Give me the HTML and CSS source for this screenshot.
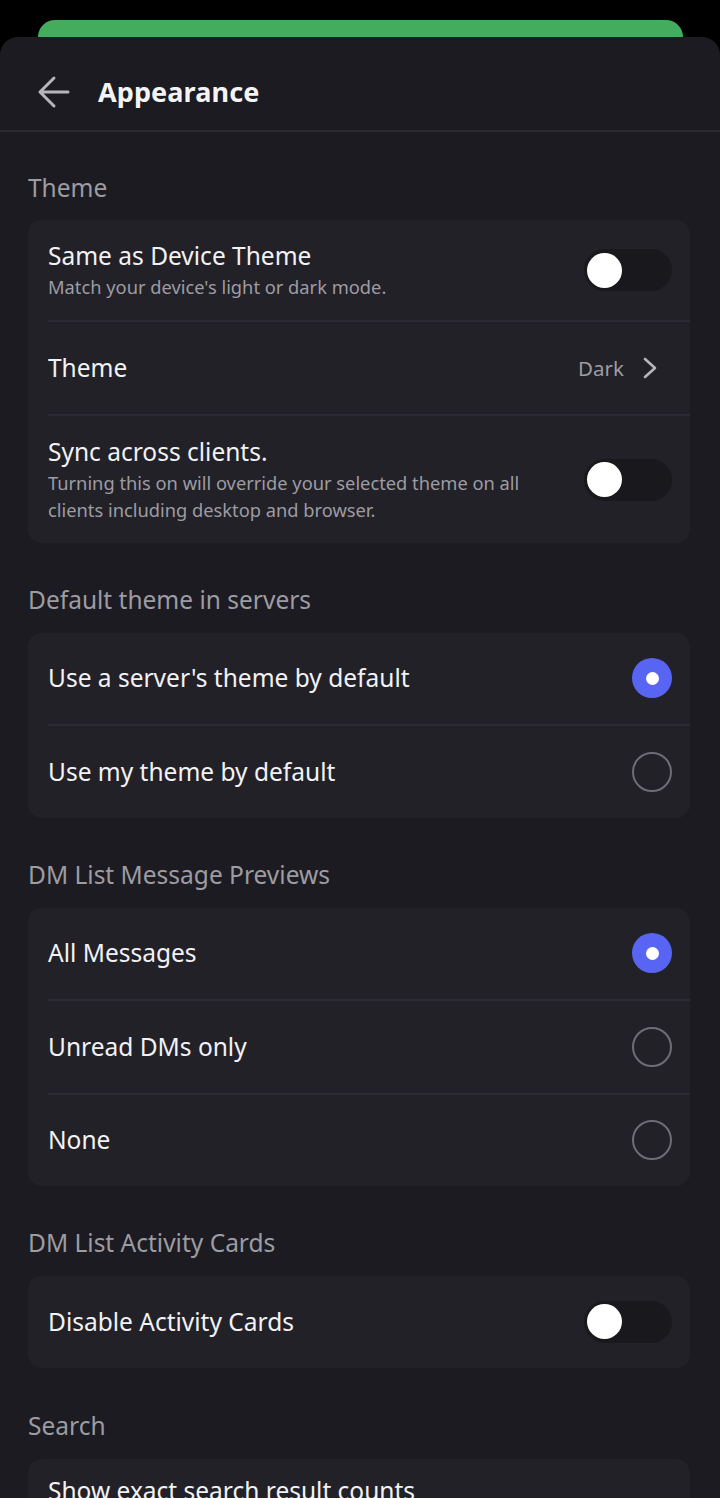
FILE: index.html
```html
<!DOCTYPE html>
<html lang="en">
<head>
<meta charset="utf-8">
<title>Appearance</title>
<link rel="stylesheet" href="styles.css">
</head>
<body>
<div class="screen">
  <div class="behind"><div class="green-bar"></div></div>
  <div class="sheet">
    <header class="topbar">
      <svg class="back" width="34" height="34" viewBox="0 0 34 34" aria-hidden="true">
        <path d="M31 17H3M17 3L3 17l14 14" fill="none" stroke="#b5b5bb" stroke-width="3" stroke-linecap="round" stroke-linejoin="round"/>
      </svg>
      <h1 class="title">Appearance</h1>
    </header>

    <main class="content">
      <section class="section">
        <h2 class="label">Theme</h2>
        <div class="card">
          <div class="row row-sub">
            <div class="text">
              <div class="row-title">Same as Device Theme</div>
              <div class="row-desc">Match your device's light or dark mode.</div>
            </div>
            <span class="toggle"><span class="knob"></span></span>
          </div>
          <div class="divider"></div>
          <div class="row">
            <div class="row-title">Theme</div>
            <div class="value">Dark
              <svg class="chev" width="16" height="22" viewBox="0 0 16 22" aria-hidden="true"><path d="M3 2l10 9-10 9" fill="none" stroke="#b5b5bb" stroke-width="2.6" stroke-linecap="round" stroke-linejoin="round"/></svg>
            </div>
          </div>
          <div class="divider"></div>
          <div class="row row-sub row-sync">
            <div class="text">
              <div class="row-title">Sync across clients.</div>
              <div class="row-desc">Turning this on will override your selected theme on all clients including desktop and browser.</div>
            </div>
            <span class="toggle"><span class="knob"></span></span>
          </div>
        </div>
      </section>

      <section class="section">
        <h2 class="label">Default theme in servers</h2>
        <div class="card">
          <div class="row">
            <div class="row-title">Use a server's theme by default</div>
            <span class="radio checked"></span>
          </div>
          <div class="divider"></div>
          <div class="row">
            <div class="row-title">Use my theme by default</div>
            <span class="radio"></span>
          </div>
        </div>
      </section>

      <section class="section">
        <h2 class="label">DM List Message Previews</h2>
        <div class="card">
          <div class="row">
            <div class="row-title">All Messages</div>
            <span class="radio checked"></span>
          </div>
          <div class="divider"></div>
          <div class="row">
            <div class="row-title">Unread DMs only</div>
            <span class="radio"></span>
          </div>
          <div class="divider"></div>
          <div class="row">
            <div class="row-title">None</div>
            <span class="radio"></span>
          </div>
        </div>
      </section>

      <section class="section">
        <h2 class="label">DM List Activity Cards</h2>
        <div class="card">
          <div class="row">
            <div class="row-title">Disable Activity Cards</div>
            <span class="toggle"><span class="knob"></span></span>
          </div>
        </div>
      </section>

      <section class="section section-search">
        <h2 class="label">Search</h2>
        <div class="card">
          <div class="row row-last">
            <div class="row-title">Show exact search result counts</div>
          </div>
        </div>
      </section>
    </main>
  </div>
</div>
</body>
</html>
```

FILE: styles.css
```css
* { box-sizing: border-box; }

html, body {
  margin: 0;
  padding: 0;
  background: #000;
}

body {
  font-family: "Noto Sans", "Open Sans", sans-serif;
  color: #f2f2f5;
  width: 720px;
  height: 1498px;
  overflow: hidden;
}

.screen {
  display: flex;
  flex-direction: column;
  height: 1498px;
}

.behind {
  height: 37px;
  padding: 20px 37px 0 38px;
  flex: none;
}

.green-bar {
  height: 17px;
  background: #43ad5d;
  border-radius: 26px 26px 0 0;
}

.sheet {
  flex: 1;
  background: #1c1b21;
  border-radius: 18px 18px 0 0;
  overflow: hidden;
}

.topbar {
  height: 95px;
  display: flex;
  align-items: center;
  padding: 16px 0 0 37px;
  gap: 27px;
  border-bottom: 2px solid #2b2a31;
}

.back { flex: none; }

.title {
  margin: 0;
  font-size: 27px;
  font-weight: 700;
  color: #f4f4f6;
  letter-spacing: 0.1px;
}

.content {
  padding: 0 30px 0 28px;
  display: flex;
  flex-direction: column;
}

.section {
  padding-top: 41px;
}

.section:first-child { padding-top: 40px; }
.section-search { padding-top: 42px; }

.label {
  margin: 0 0 17px;
  font-size: 24.5px;
  font-weight: 400;
  line-height: 32px;
  color: #9d9ca3;
}

.section:first-child .label { margin-bottom: 16px; }

.card {
  background: #222128;
  border-radius: 14px;
  display: flex;
  flex-direction: column;
}

.row {
  height: 91.5px;
  display: flex;
  align-items: center;
  justify-content: space-between;
  padding: 0 18px 0 20px;
}

.row-sub {
  height: auto;
  padding-top: 21px;
  padding-bottom: 21px;
}

.row-sync {
  padding-top: 21px;
  padding-bottom: 20px;
}

.text {
  display: flex;
  flex-direction: column;
  min-width: 0;
}

.row-title {
  font-size: 24.5px;
  line-height: 30px;
  color: #f2f2f5;
}

.row-desc {
  font-size: 18.3px;
  line-height: 27px;
  color: #9d9ca3;
  max-width: 490px;
  margin-top: 2px;
}

.row-sub:first-child .row-desc { line-height: 24px; margin-top: 4px; }

.divider {
  height: 2px;
  background: #2c2b33;
  margin-left: 20px;
}

.value {
  display: flex;
  align-items: center;
  gap: 18px;
  font-size: 20.5px;
  color: #9d9ca3;
  padding-right: 14px;
}

.toggle {
  flex: none;
  width: 88px;
  height: 42px;
  border-radius: 21px;
  background: #19181d;
  display: flex;
  align-items: center;
  padding-left: 3px;
}

.knob {
  width: 35px;
  height: 35px;
  border-radius: 50%;
  background: #ffffff;
}

.radio {
  flex: none;
  width: 40px;
  height: 40px;
  border-radius: 50%;
  border: 2px solid #6e6d75;
  display: flex;
  align-items: center;
  justify-content: center;
}

.radio.checked {
  border: none;
  background: #5865f2;
}

.radio.checked::after {
  content: "";
  width: 13px;
  height: 13px;
  border-radius: 50%;
  background: #ffffff;
}

.row-last {
  align-items: flex-start;
  padding-top: 17px;
}
```
